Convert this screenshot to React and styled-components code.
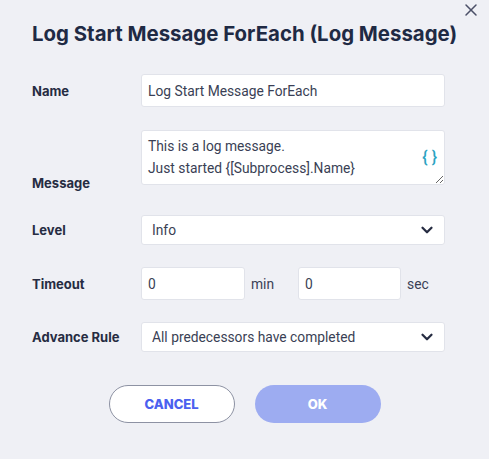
import React from 'react'
import styled, { createGlobalStyle } from 'styled-components'
import { ChevronDown, X } from 'lucide-react'

const GlobalStyle = createGlobalStyle`
    body {
        margin: 0;
        background: #eff0f5;
        font-family: Roboto, "Liberation Sans", sans-serif;
    }
`

const Dialog = styled.div`
    position: relative;
    box-sizing: border-box;
    width: 489px;
    height: 459px;
    padding: 21px 44px 0 32px;
    background: #eff0f5;
`

const CloseButton = styled.button`
    position: absolute;
    top: 0;
    right: 8px;
    width: 20px;
    height: 20px;
    padding: 0;
    border: none;
    background: none;
    color: #4b5068;
    display: flex;
    align-items: center;
    justify-content: center;
    cursor: pointer;
`

const Title = styled.h2`
    margin: 0;
    font-family: Inter, "Noto Sans", sans-serif;
    font-size: 20.4px;
    line-height: 25px;
    font-weight: 700;
    color: #1f2a44;
    white-space: nowrap;
`

const Form = styled.div`
    margin-top: 28px;
    display: grid;
    grid-template-columns: 109px 304px;
    row-gap: 22px;
`

const Label = styled.label`
    font-family: Inter, "Noto Sans", sans-serif;
    font-size: 13px;
    font-weight: 700;
    color: #262c42;
    align-self: ${props => props.$bottom ? 'end' : 'center'};
    margin-bottom: ${props => props.$bottom ? '2px' : '0'};
`

const Field = styled.div`
    position: relative;
    display: flex;
    align-items: center;
    margin-bottom: ${props => props.$extra || 0}px;
`

const TextInput = styled.input`
    box-sizing: border-box;
    width: ${props => props.$width || '100%'};
    height: 33px;
    padding: 0 6px;
    border: 1px solid #e1e3ea;
    border-radius: 3px;
    background: #fff;
    font-family: Roboto, sans-serif;
    font-size: 13.8px;
    color: #3a3f55;
    outline: none;
`

const TextArea = styled.textarea`
    box-sizing: border-box;
    width: 100%;
    height: 55px;
    padding: 4px 40px 0 6px;
    border: 1px solid #e1e3ea;
    border-radius: 3px;
    background: #fff;
    font-family: Roboto, sans-serif;
    font-size: 13.8px;
    line-height: 22px;
    color: #3a3f55;
    resize: vertical;
    outline: none;
    overflow: hidden;
`

const Braces = styled.span`
    position: absolute;
    right: 8px;
    top: 50%;
    transform: translateY(-52%);
    font-family: Roboto, sans-serif;
    font-size: 16px;
    font-weight: 500;
    color: #2ba3c2;
    white-space: pre;
`

const SelectBox = styled.div`
    box-sizing: border-box;
    width: 100%;
    height: 30px;
    padding: 0 8px 0 10px;
    border: 1px solid #e1e3ea;
    border-radius: 3px;
    background: #fff;
    display: flex;
    align-items: center;
    justify-content: space-between;
    font-size: 13.8px;
    color: #3a3f55;
`

const Unit = styled.span`
    font-size: 13.8px;
    color: #3a3f55;
    margin: 0 ${props => props.$right || 0}px 0 6px;
`

const Buttons = styled.div`
    margin: 33px 0 0 -32px;
    width: 489px;
    display: flex;
    justify-content: center;
    gap: 20px;
`

const Button = styled.button`
    box-sizing: border-box;
    width: 126px;
    height: 38px;
    border-radius: 19px;
    border: ${props => props.$primary ? 'none' : '1px solid #8d92a3'};
    background: ${props => props.$primary ? '#9dacf1' : '#fff'};
    color: ${props => props.$primary ? '#fff' : '#4b60ef'};
    font-family: Inter, "Noto Sans", sans-serif;
    font-size: 13px;
    font-weight: 800;
    cursor: pointer;
`

const Select = ({ value }) => (
    <SelectBox>
        <span>{value}</span>
        <ChevronDown size={18} strokeWidth={3} color="#262c42" />
    </SelectBox>
)

export default function App() {
    return (
        <Dialog>
            <GlobalStyle />
            <CloseButton>
                <X size={20} strokeWidth={1.8} />
            </CloseButton>
            <Title>Log Start Message ForEach (Log Message)</Title>
            <Form>
                <Label>Name</Label>
                <Field $extra={1}>
                    <TextInput defaultValue="Log Start Message ForEach" />
                </Field>

                <Label $bottom>Message</Label>
                <Field $extra={8}>
                    <TextArea defaultValue={'This is a log message.\nJust started {[Subprocess].Name}'} />
                    <Braces>{'{ }'}</Braces>
                </Field>

                <Label>Level</Label>
                <Field>
                    <Select value="Info" />
                </Field>

                <Label>Timeout</Label>
                <Field>
                    <TextInput $width="104px" defaultValue="0" />
                    <Unit $right={24}>min</Unit>
                    <TextInput $width="103px" defaultValue="0" />
                    <Unit>sec</Unit>
                </Field>

                <Label>Advance Rule</Label>
                <Field>
                    <Select value="All predecessors have completed" />
                </Field>
            </Form>
            <Buttons>
                <Button>CANCEL</Button>
                <Button $primary>OK</Button>
            </Buttons>
        </Dialog>
    )
}
